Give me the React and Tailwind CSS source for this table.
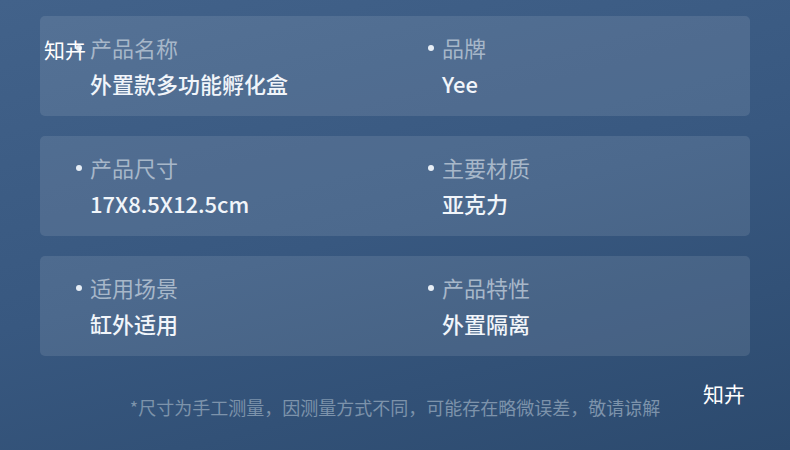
import React from "react";

const rows = [
  [["产品名称", "外置款多功能孵化盒"], ["品牌", "Yee"]],
  [["产品尺寸", "17X8.5X12.5cm"], ["主要材质", "亚克力"]],
  [["适用场景", "缸外适用"], ["产品特性", "外置隔离"]],
];

const font = { fontFamily: '"Noto Sans CJK SC", "Noto Sans", sans-serif' };

function Item({ label, value }) {
  return (
    <div className="flex flex-col">
      <div className="flex items-center leading-[36px] text-[22px] text-[#a7b7c9]">
        <span className="w-[6px] h-[6px] rounded-full bg-[#e6edf5] mr-[8px] mt-[2px]" />
        <span>{label}</span>
      </div>
      <div className="pl-[14px] leading-[36px] text-[22px] font-medium text-[#f1f5fa]">{value}</div>
    </div>
  );
}

export default function App() {
  return (
    <div
      className="relative w-[790px] h-[450px] overflow-hidden bg-[linear-gradient(165deg,#42628a_0%,#385880_50%,#2c4a6e_100%)]"
      style={font}
    >
      <div className="flex flex-col gap-5 px-10 pt-4">
        {rows.map((r, i) => (
          <div
            key={i}
            className="h-[100px] rounded-[5px] bg-white/[0.1] pl-[36px] pt-[13px] grid grid-cols-[352px_1fr]"
          >
            <Item label={r[0][0]} value={r[0][1]} />
            <Item label={r[1][0]} value={r[1][1]} />
          </div>
        ))}
      </div>
      <div className="mt-[38px] text-center text-[18px] leading-[26px] text-[#7d93ab]">
        *尺寸为手工测量，因测量方式不同，可能存在略微误差，敬请谅解
      </div>
      <div className="absolute left-[44px] top-[35px] text-[21px] leading-[28px] text-white">知卉</div>
      <div className="absolute left-[703px] top-[379px] text-[21px] leading-[28px] text-white">知卉</div>
    </div>
  );
}
